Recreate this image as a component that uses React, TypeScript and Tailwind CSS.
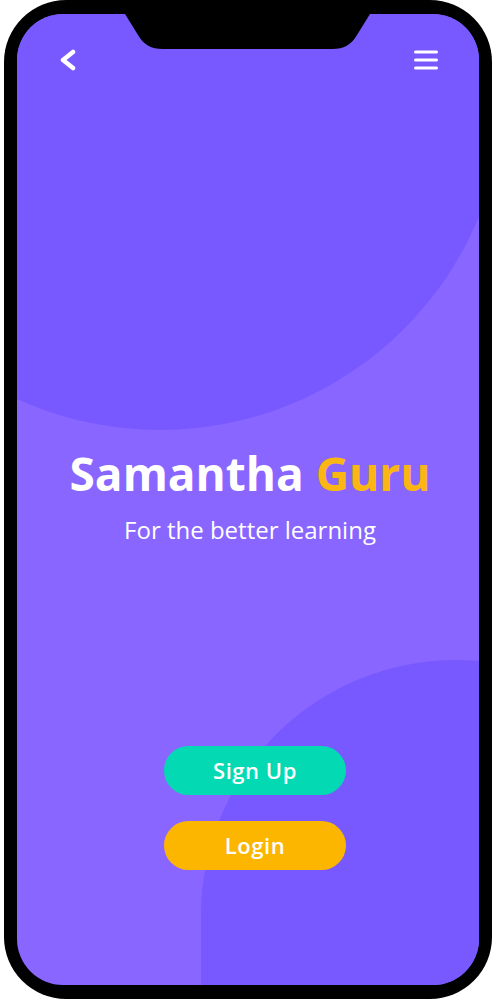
import React from "react";

function BackIcon() {
  return (
    <svg width="20" height="24" viewBox="0 0 20 24" fill="none">
      <polyline
        points="14,3 4,11 14,19"
        stroke="white"
        strokeWidth="4.5"
        strokeLinecap="round"
        strokeLinejoin="round"
      />
    </svg>
  );
}

function MenuIcon() {
  return (
    <svg width="24" height="24" viewBox="0 0 24 24" fill="none">
      <line x1="1.5" y1="3" x2="22.5" y2="3" stroke="white" strokeWidth="3" strokeLinecap="round" />
      <line x1="1.5" y1="11" x2="22.5" y2="11" stroke="white" strokeWidth="3" strokeLinecap="round" />
      <line x1="1.5" y1="19" x2="22.5" y2="19" stroke="white" strokeWidth="3" strokeLinecap="round" />
    </svg>
  );
}

export default function App() {
  return (
    <div className="w-[495px] h-[999px] bg-white">
      <div className="ml-[4px] w-[488px] h-[999px] bg-black rounded-[62px] px-[13px] py-[14px]">
        <div className="relative h-full overflow-hidden rounded-[46px] bg-[#8966ff]">
          {/* background blobs */}
          <div className="absolute left-[-202px] top-[-304px] w-[690px] h-[720px] rounded-full bg-[#7859ff]" />
          <div className="absolute left-[184px] top-[646px] w-[510px] h-[680px] rounded-full bg-[#7859ff]" />

          {/* notch */}
          <svg className="absolute left-0 top-0" width="462" height="40" viewBox="0 0 462 40">
            <path
              d="M108 0 L121 21 C127 31 134 35 146 35 L315 35 C327 35 334 31 340 21 L353 0 Z"
              fill="black"
            />
          </svg>

          <div className="relative flex flex-col items-center" style={{ fontFamily: '"Open Sans", "Noto Sans", sans-serif' }}>
            <div className="flex w-full items-center justify-between pl-[42px] pr-[41px] pt-[35px]">
              <BackIcon />
              <MenuIcon />
            </div>

            <h1 className="mt-[377px] ml-[4px] text-[46px] leading-none font-bold text-white">
              Samantha <span className="text-[#fbb614]">Guru</span>
            </h1>
            <p className="mt-[22px] ml-[4px] text-[24px] leading-none text-white">For the better learning</p>

            <div className="mt-[204px] ml-[14px] flex flex-col gap-[26px]">
              <button className="w-[182px] h-[49px] rounded-full bg-[#03d9b2] text-white text-[22px] font-semibold tracking-wide">
                Sign Up
              </button>
              <button className="w-[182px] h-[49px] rounded-full bg-[#fdb600] text-white text-[22px] font-semibold tracking-wide">
                Login
              </button>
            </div>
          </div>
        </div>
      </div>
    </div>
  );
}
